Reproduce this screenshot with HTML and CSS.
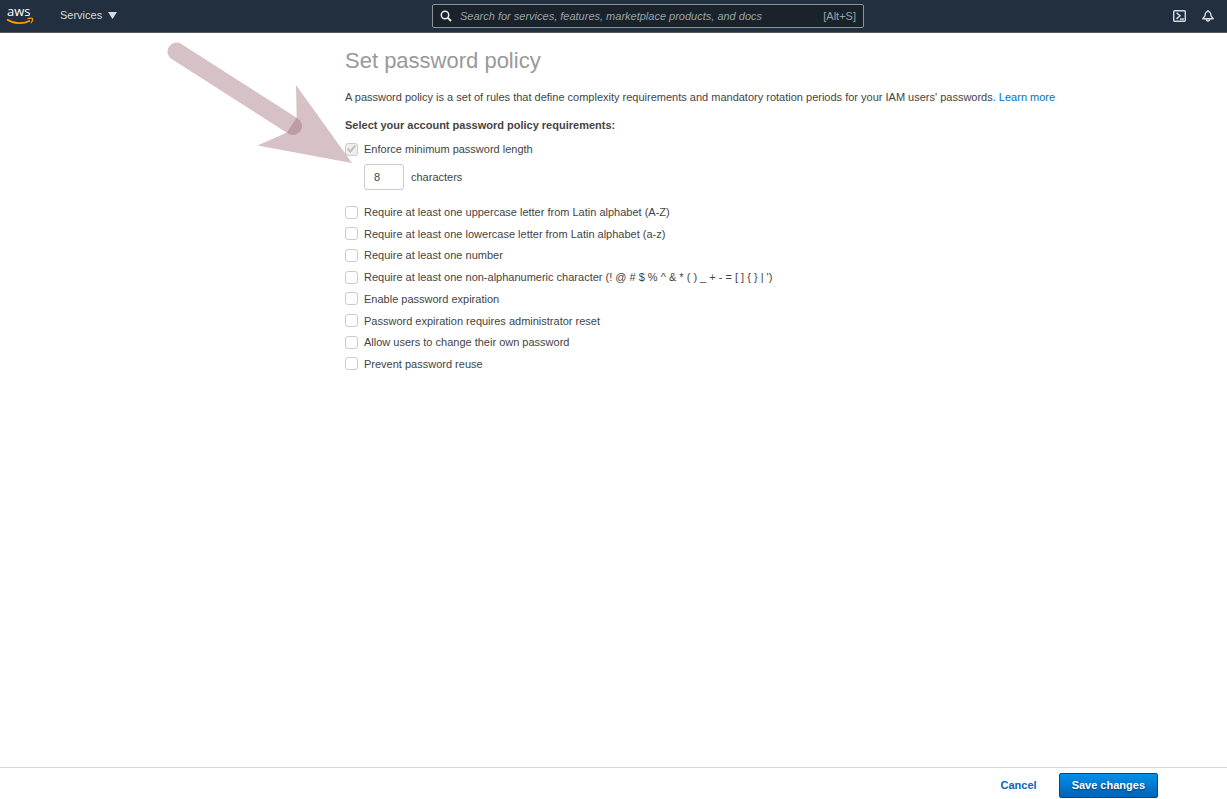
FILE: index.html
```html
<!DOCTYPE html>
<html lang="en">
<head>
<meta charset="utf-8">
<title>Set password policy</title>
<link rel="stylesheet" href="styles.css">
</head>
<body>
<header class="topbar">
  <a class="logo" href="#" aria-label="AWS home">
    <svg width="28" height="24" viewBox="0 -4 28 24" aria-hidden="true">
      <text class="logo-text" x="1" y="10">aws</text>
      <path d="M1 13.500C8 18 17 18.200 24 14.700" fill="none" stroke="#f90" stroke-width="1.700"/>
      <path d="M21.500 12.700C24 12 26 12 26.500 12.600C26.800 13.700 26.200 15.800 24.900 17.200" fill="none" stroke="#f90" stroke-width="1.200"/>
    </svg>
  </a>
  <button class="services" type="button">Services
    <svg width="9" height="8" viewBox="0 0 9 8" aria-hidden="true"><path d="M0 1H9L4.500 8Z" fill="currentColor"/></svg>
  </button>
  <label class="search">
    <svg width="12" height="12" viewBox="0 0 12 12" fill="none" stroke="#eaeded" aria-hidden="true"><circle cx="5" cy="5" r="3.700" stroke-width="1.500"/><path d="M7.700 7.700L11 11" stroke-width="1.900"/></svg>
    <input type="search" aria-label="Search" placeholder="Search for services, features, marketplace products, and docs">
    <span class="shortcut">[Alt+S]</span>
  </label>
  <div class="tools">
    <button class="tool" type="button" aria-label="CloudShell">
      <svg width="13" height="12" viewBox="0 0 13 12" fill="none" stroke="currentColor"><rect x="0.700" y="0.700" width="11.600" height="10.600" rx="1" stroke-width="1.400"/><path d="M3.500 2.700L7 5.800L3.500 8.900" stroke-width="1.500"/><path d="M7 9.100H11" stroke-width="1.500"/></svg>
    </button>
    <button class="tool" type="button" aria-label="Notifications">
      <svg width="12" height="12" viewBox="0 0 12 12" fill="none" stroke="currentColor" stroke-width="1.400"><path d="M0.800 8.700L3 5.800C3.100 3 4 1.600 6 1.400C8 1.600 8.900 3 9 5.800L11.200 8.700Z" stroke-linejoin="round"/><path d="M6 0V1.500M4.300 8.700C4.300 11.800 7.700 11.800 7.700 8.700"/></svg>
    </button>
  </div>
</header>
<main class="content">
  <h1 class="title">Set password policy</h1>
  <p class="intro">A password policy is a set of rules that define complexity requirements and mandatory rotation periods for your IAM users' passwords. <a class="link" href="#">Learn more</a></p>
  <form id="policy" class="policy">
    <h2 class="subtitle">Select your account password policy requirements:</h2>
    <label class="option"><input class="check" type="checkbox" checked disabled>Enforce minimum password length</label>
    <label class="length"><input class="number" type="text" inputmode="numeric" value="8">characters</label>
    <div class="options">
      <label class="option"><input class="check" type="checkbox">Require at least one uppercase letter from Latin alphabet (A-Z)</label>
      <label class="option"><input class="check" type="checkbox">Require at least one lowercase letter from Latin alphabet (a-z)</label>
      <label class="option"><input class="check" type="checkbox">Require at least one number</label>
      <label class="option"><input class="check" type="checkbox">Require at least one non-alphanumeric character (! @ # $ % ^ &amp; * ( ) _ + - = [ ] { } | ')</label>
      <label class="option"><input class="check" type="checkbox">Enable password expiration</label>
      <label class="option"><input class="check" type="checkbox">Password expiration requires administrator reset</label>
      <label class="option"><input class="check" type="checkbox">Allow users to change their own password</label>
      <label class="option"><input class="check" type="checkbox">Prevent password reuse</label>
    </div>
  </form>
  <svg class="pointer" width="186" height="122" viewBox="0 0 186 122" aria-hidden="true">
    <path d="M9.500 9.500L126 84" stroke="#986470" stroke-opacity="0.400" stroke-width="18" stroke-linecap="round"/>
    <path d="M129 43L185 121L90.500 103.500L120 90.500L129.700 75.500Z" fill="#986470" fill-opacity="0.400"/>
  </svg>
</main>
<footer class="actions">
  <button class="cancel" type="button">Cancel</button>
  <button class="save" type="submit" form="policy">Save changes</button>
</footer>
</body>
</html>
```

FILE: styles.css
```css
* {
  box-sizing: border-box;
}

body {
  display: flex;
  flex-direction: column;
  min-height: 100vh;
  margin: 0;
  background: #fff;
  color: #444;
  font: 11px/14px "Liberation Sans", Arial, sans-serif;
}

button,
input {
  font: inherit;
}

button {
  padding: 0;
  border: 0;
  background: none;
  cursor: pointer;
}

.topbar {
  display: grid;
  grid-template-columns: 28px 1fr 432px minmax(0, 350px);
  align-items: center;
  height: 33px;
  padding: 0 13px 0 6px;
  border-bottom: 1px solid #535b63;
  background: #212f3e;
  color: #d5dbdb;
}

.logo {
  padding-bottom: 4px;
}

.logo,
.logo svg {
  display: block;
}

.logo-text {
  fill: #fff;
  font: 500 13px "Open Sans", sans-serif;
}

.services {
  display: flex;
  align-items: center;
  gap: 6px;
  margin-left: 26px;
  padding-bottom: 2px;
  color: inherit;
}

.search {
  display: flex;
  align-items: center;
  gap: 8px;
  height: 24px;
  padding: 0 7px;
  border: 1px solid #879596;
  border-radius: 2px;
  background: #1a222c;
  color: #95a5a6;
}

.search input {
  flex: 1;
  min-width: 0;
  padding: 0;
  border: 0;
  outline: 0;
  background: none;
  color: #eaeded;
}

.search input::placeholder {
  color: #95a5a6;
  font-style: italic;
  opacity: 1;
}

.tools {
  display: flex;
  justify-content: flex-end;
  gap: 16px;
}

.tool {
  color: inherit;
}

.tool svg {
  display: block;
}

.content {
  position: relative;
  flex: 1;
  padding: 14px 24px 24px 345px;
}

.title {
  margin: 0 0 15px;
  color: #999;
  font-size: 22px;
  font-weight: normal;
  line-height: 28px;
}

.intro {
  margin: 0 0 14px;
}

.subtitle {
  margin: 0 0 10px;
  font-size: 11px;
  line-height: 14px;
}

.link {
  color: #0073bb;
  text-decoration: none;
}

.option {
  display: flex;
  align-items: center;
  gap: 6px;
}

.check {
  flex: none;
  width: 13px;
  height: 13px;
  margin: 0;
  border: 1px solid #ccc;
  border-radius: 3px;
  background: #fff;
  appearance: none;
}

.check:checked {
  display: grid;
  place-items: center;
  background: #eee;
}

.check:checked::before {
  width: 9px;
  height: 8px;
  background: #bbb;
  clip-path: polygon(0 50%, 15% 36%, 36% 62%, 85% 0, 100% 14%, 38% 100%);
  content: "";
}

.length {
  display: flex;
  align-items: center;
  gap: 7px;
  margin: 8px 0 15px 19px;
}

.number {
  width: 40px;
  height: 26px;
  padding: 0 9px;
  border: 1px solid #ccc;
  border-radius: 3px;
  background: #fff;
  color: #444;
}

.options {
  display: flex;
  flex-direction: column;
  justify-content: space-between;
  min-height: 166px;
}

.pointer {
  position: absolute;
  top: 9px;
  left: 167px;
  pointer-events: none;
}

.actions {
  display: flex;
  align-items: center;
  justify-content: flex-end;
  gap: 22px;
  padding: 5px 69px 1px 24px;
  border-top: 1px solid #d5d5d5;
}

.cancel {
  padding-bottom: 2px;
  color: #0066b8;
  font-weight: bold;
}

.save {
  height: 25px;
  padding: 0 12px 2px;
  border: 1px solid #004a80;
  border-radius: 2px;
  background: linear-gradient(#0090e8, #0063b8);
  color: #fff;
  font-weight: bold;
  text-shadow: 0 1px 2px #00335c;
}
```
